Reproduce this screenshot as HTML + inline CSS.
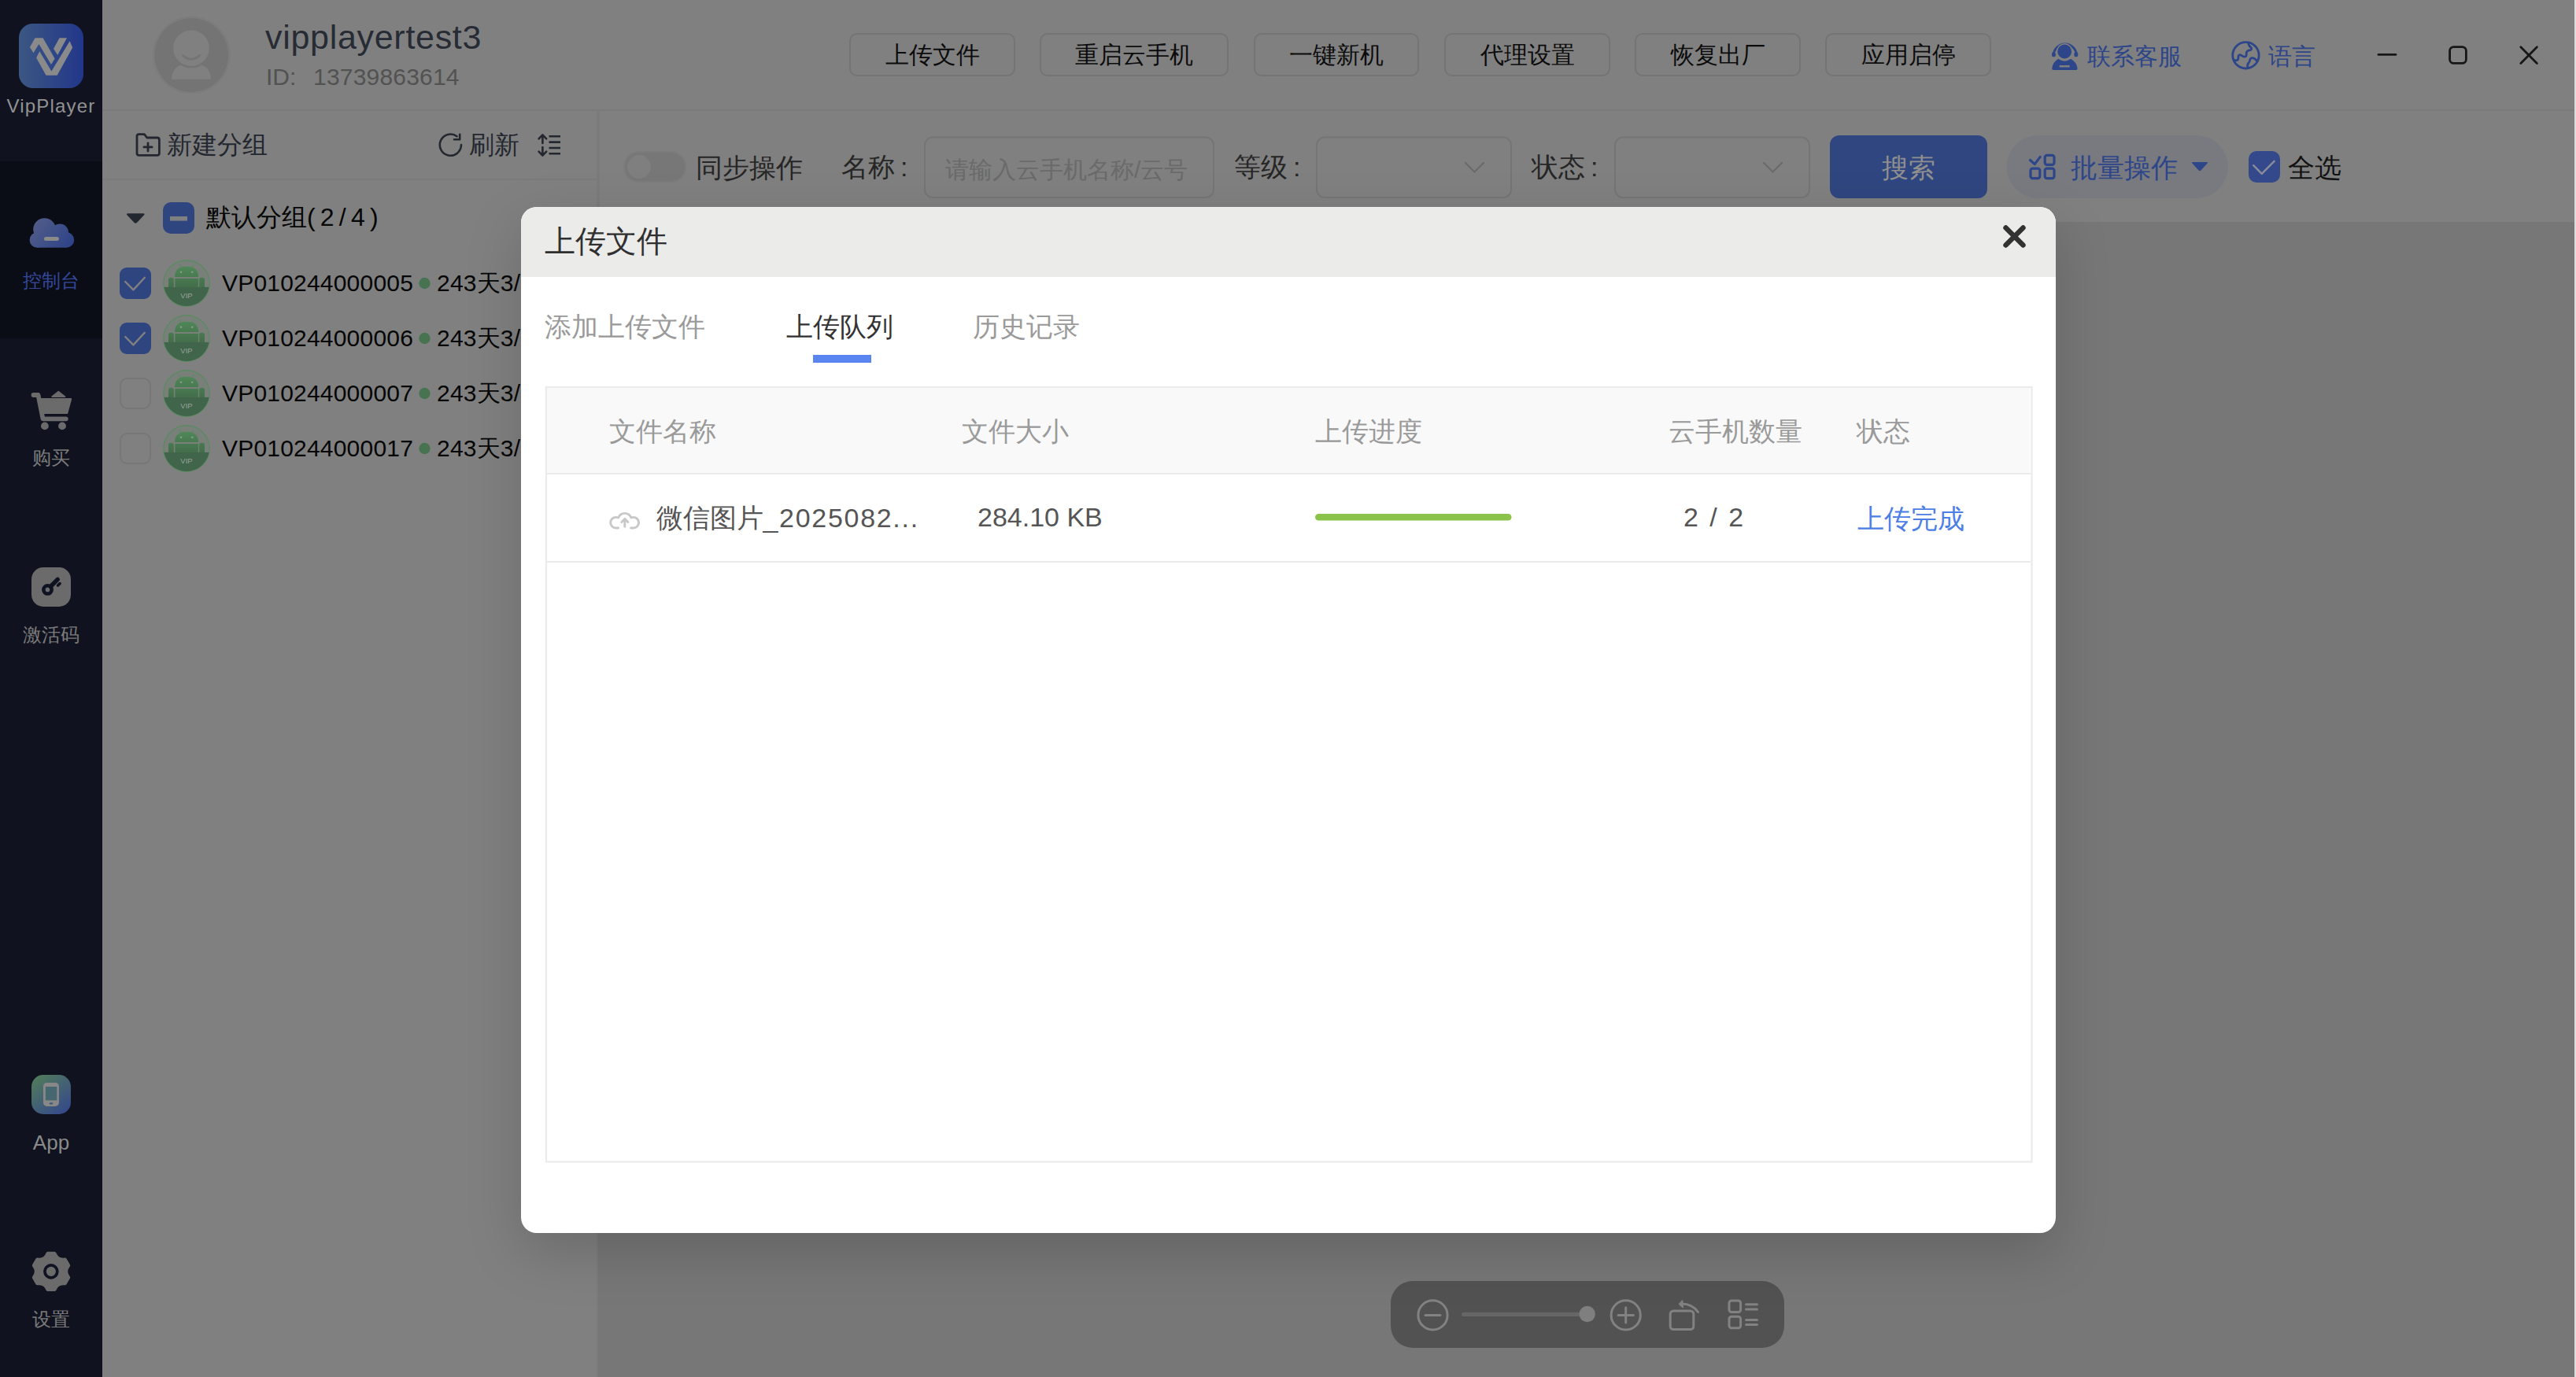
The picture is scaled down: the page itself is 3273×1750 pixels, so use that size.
<!DOCTYPE html>
<html><head><meta charset="utf-8">
<style>
html,body{margin:0;padding:0;}
body{width:3273px;height:1750px;overflow:hidden;position:relative;background:#808080;font-family:"Liberation Sans",sans-serif;}
.a{position:absolute;}
.t{position:absolute;white-space:nowrap;line-height:1;}
svg{position:absolute;left:0;top:0;overflow:visible;}
.btn{position:absolute;top:42px;height:55px;border:2px solid #747474;border-radius:10px;box-sizing:border-box;}
.btxt{position:absolute;left:0;top:11px;width:100%;text-align:center;font-size:30px;line-height:30px;color:#0c0c0c;}
.side{font-size:24px;color:#7b7b7b;left:0;width:130px;text-align:center;}
.f34{font-size:34px;}
.dev{font-size:30px;color:#060606;letter-spacing:0.2px;}
</style></head><body>
<!-- ============ SIDEBAR ============ -->
<div class="a" style="left:0;top:0;width:130px;height:1750px;background:#10131f"></div>
<div class="a" style="left:0;top:205px;width:130px;height:225px;background:#0a0c16"></div>
<svg width="130" height="1750" viewBox="0 0 130 1750">
  <defs>
    <linearGradient id="lg" x1="24" y1="0" x2="106" y2="0" gradientUnits="userSpaceOnUse"><stop offset="0" stop-color="#3c5783"/><stop offset="1" stop-color="#22378a"/></linearGradient>
    <linearGradient id="cg" x1="40" y1="277" x2="90" y2="315" gradientUnits="userSpaceOnUse"><stop offset="0" stop-color="#545f88"/><stop offset="1" stop-color="#2d4288"/></linearGradient>
    <linearGradient id="ag" x1="45" y1="1366" x2="85" y2="1416" gradientUnits="userSpaceOnUse"><stop offset="0" stop-color="#527c5a"/><stop offset="1" stop-color="#34478c"/></linearGradient>
  </defs>
  <rect x="24" y="30" width="82" height="82" rx="18" fill="url(#lg)"/>
  <g transform="translate(24,30)" fill="#8a8a8a">
    <path d="M13.9,30.1 L20.5,18.3 L30.6,18.3 L45.6,44.4 L41,52 L25.4,26.1 L18.5,37.3 Z"/>
    <path d="M44,32 L51.5,18.3 L61,18.3 L49.2,39.9 Z"/>
    <path d="M22.1,43.5 L26.3,35.3 L41.4,60.5 L64.6,22.2 L68.2,30.4 L48.6,65.7 L34.5,65.7 Z"/>
  </g>
  <!-- cloud -->
  <g fill="url(#cg)">
    <circle cx="56.6" cy="291.6" r="14.4"/><circle cx="76.2" cy="295.5" r="10.9"/>
    <circle cx="47.4" cy="305" r="9.8"/><circle cx="84.4" cy="304.9" r="9.8"/>
    <rect x="47.4" y="294" width="37" height="20.7"/>
  </g>
  <rect x="55.9" y="301" width="19" height="5" rx="2.5" fill="#8a8a8a"/>
  <!-- cart -->
  <g transform="translate(30,488)" fill="#6b6b6b" stroke="#6b6b6b" stroke-linecap="round" stroke-linejoin="round">
    <path d="M12.5,14 H18.5 L24.5,44.3 H53.8" fill="none" stroke-width="5.8"/>
    <path d="M21,19.4 H59.8 L55,36.8 H24.6 Z" stroke-width="2.6"/>
    <circle cx="26.9" cy="53.4" r="4.9" stroke="none"/><circle cx="49" cy="53.4" r="4.9" stroke="none"/>
    <path d="M36,16.2 L44.2,9.6 L52.6,16.2 Z" stroke-width="1.5"/>
  </g>
  <!-- key -->
  <rect x="40" y="721" width="50" height="50" rx="15" fill="#6b6b6b"/>
  <g stroke="#0f1220" fill="none" stroke-linecap="round">
    <circle cx="60.5" cy="749.4" r="5.1" stroke-width="4.6"/>
    <path d="M64.2,745.5 L73.2,736.4" stroke-width="5.4"/>
    <path d="M73.5,744 L76,741.6" stroke-width="3.6"/>
  </g>
  <!-- app -->
  <rect x="40" y="1366" width="50" height="50" rx="15" fill="url(#ag)"/>
  <rect x="55" y="1376" width="19.9" height="29.9" rx="4.5" fill="#888"/>
  <rect x="57.9" y="1381" width="14.4" height="17.4" fill="#46676f"/>
  <rect x="62.8" y="1401.2" width="4.4" height="2.3" rx="1" fill="#40597e"/>
  <!-- gear -->
  <path d="M60.80,1593.30 L69.20,1593.30 Q72.80,1602.39 82.47,1600.96 L82.47,1600.96 L86.67,1608.24 Q80.60,1615.90 86.67,1623.56 L86.67,1623.56 L82.47,1630.84 Q72.80,1629.41 69.20,1638.50 L69.20,1638.50 L60.80,1638.50 Q57.20,1629.41 47.53,1630.84 L47.53,1630.84 L43.33,1623.56 Q49.40,1615.90 43.33,1608.24 L43.33,1608.24 L47.53,1600.96 Q57.20,1602.39 60.80,1593.30 Z" fill="#6b6b6b" stroke="#6b6b6b" stroke-width="5" stroke-linejoin="round"/>
  <circle cx="64.85" cy="1615.85" r="7.95" fill="none" stroke="#0f1220" stroke-width="3.7"/>
</svg>
<div class="t" style="left:0;width:130px;text-align:center;top:123px;font-size:24px;letter-spacing:1.2px;color:#929292">VipPlayer</div>
<div class="t side" style="top:345px;color:#34489a">控制台</div>
<div class="t side" style="top:570px">购买</div>
<div class="t side" style="top:795px">激活码</div>
<div class="t side" style="top:1439px;font-size:26px;color:#8a8a8a">App</div>
<div class="t side" style="top:1665px">设置</div>

<!-- ============ HEADER ============ -->
<div class="a" style="left:130px;top:139px;width:3141px;height:2px;background:#7a7a7a"></div>
<svg width="3273" height="140" viewBox="0 0 3273 140">
  <circle cx="243.2" cy="70" r="48.3" fill="none" stroke="#7b7b7b" stroke-width="1.5"/>
  <circle cx="243.2" cy="70" r="47" fill="#747474"/>
  <path d="M218,100.8 Q218.5,80.5 243,80.5 Q267.5,80.5 268,100.8 Z" fill="#808080"/>
  <circle cx="243" cy="61.2" r="24" fill="#808080" stroke="#747474" stroke-width="2.5"/>
  <path d="M232.5,70.5 Q243,80 253.5,70.5" fill="none" stroke="#747474" stroke-width="3" stroke-linecap="round"/>
  <!-- headset -->
  <g fill="#2d4589">
    <path d="M2609.2,70.5 A14.6,14.6 0 0 1 2638.4,70.5" fill="none" stroke="#2d4589" stroke-width="2.8"/>
    <rect x="2607" y="66.2" width="4.8" height="6" rx="2"/>
    <rect x="2635.4" y="66.2" width="4.8" height="6" rx="2"/>
    <circle cx="2623.2" cy="65.5" r="10.4" fill="#808080"/>
    <circle cx="2623.2" cy="65.5" r="8.9"/>
    <path d="M2607.2,87 Q2607.8,79.5 2615.3,74.8 Q2623.2,80.5 2631,74.8 Q2639,79.5 2639.6,87 Q2639.6,89 2637.5,89 H2609.2 Q2607.1,89 2607.2,87 Z"/>
  </g>
  <rect x="2616.5" y="83" width="13.3" height="2.4" rx="1" fill="#808080"/>
  <!-- globe -->
  <g fill="none" stroke="#2d4589" stroke-width="2.8" stroke-linecap="round" stroke-linejoin="round">
    <circle cx="2853.45" cy="70.3" r="16.7"/>
    <path transform="translate(2830,48)" d="M26.8,6.5 Q27,10.5 30,12.2 Q31.5,14.5 29.5,15.5 Q26,15.8 24.6,18 Q24,19.5 24.2,22 Q23.8,24.8 20.8,24 L16.5,21.8 Q14,21.5 13.9,24 V26.5 Q13.5,28.8 10.8,28.8 L8.3,28.4 M25.8,37.6 Q25.2,34 27,32 Q28.8,30 28.8,27.8 Q29.5,25.5 32,25.7 Q35,26 37.6,29.4"/>
  </g>
  <!-- window controls -->
  <g fill="none" stroke="#161616" stroke-width="2.8" stroke-linecap="round">
    <path d="M3022,69.4 H3044"/>
    <rect x="3112.6" y="59.6" width="20.8" height="20.8" rx="5"/>
    <path d="M3202.8,59.8 L3223.4,80.4 M3223.4,59.8 L3202.8,80.4"/>
  </g>
</svg>
<div class="t" style="left:337px;top:26px;font-size:43px;letter-spacing:0.7px;color:#272b34">vipplayertest3</div>
<div class="t" style="left:338px;top:83px;font-size:30px;color:#525252">ID:</div>
<div class="t" style="left:398px;top:83px;font-size:30px;letter-spacing:0.2px;color:#525252">13739863614</div>

<div class="btn" style="left:1079px;width:211px"><div class="btxt">上传文件</div></div>
<div class="btn" style="left:1321px;width:240px"><div class="btxt">重启云手机</div></div>
<div class="btn" style="left:1593px;width:210px"><div class="btxt">一键新机</div></div>
<div class="btn" style="left:1835px;width:211px"><div class="btxt">代理设置</div></div>
<div class="btn" style="left:2077px;width:211px"><div class="btxt">恢复出厂</div></div>
<div class="btn" style="left:2319px;width:211px"><div class="btxt">应用启停</div></div>
<div class="t" style="left:2652px;top:57px;font-size:30px;color:#2d4589">联系客服</div>
<div class="t" style="left:2882px;top:57px;font-size:30px;color:#2d4589">语言</div>

<!-- ============ LEFT PANEL ============ -->
<div class="a" style="left:758px;top:141px;width:4px;height:141px;background:#7b7b7b"></div><div class="a" style="left:758px;top:282px;width:2px;height:1468px;background:#7b7b7b"></div>
<div class="a" style="left:130px;top:227px;width:628px;height:2px;background:#7b7b7b"></div>
<svg width="760" height="620" viewBox="0 0 760 620">
  <g fill="none" stroke="#23272f" stroke-width="2.8" stroke-linecap="round" stroke-linejoin="round">
    <path d="M174,173 Q174,170.6 176.5,170.6 H183.4 L186.8,175 H199.6 Q202.4,175 202.4,177.8 V194.8 Q202.4,197.4 199.6,197.4 H176.8 Q174,197.4 174,194.8 Z"/>
    <path d="M188,181.8 V192 M182.9,186.9 H193.1"/>
    <path d="M586,184.1 A13.6,13.6 0 1 1 580.5,173.2" stroke-width="2.6"/>
    <path d="M577,177.2 H584.2 V170.8" stroke-width="2.6"/>
    <path d="M689.4,172 V182 M684.6,176.4 L689.4,171.4 L694.2,176.4 M689.4,187 V197 M684.6,192.6 L689.4,197.6 L694.2,192.6" stroke-width="2.6"/>
    <path d="M697.5,173.3 H712 M697.5,180.6 H712 M697.5,188 H712 M697.5,195.2 H712" stroke-width="2.6" stroke-linecap="butt"/>
  </g>
  <path d="M162.5,271.2 H182 Q184.6,271.2 182.9,273.4 L173.9,283 Q172.2,284.6 170.6,283 L161.6,273.4 Q159.9,271.2 162.5,271.2 Z" fill="#23272f"/>
  <rect x="207" y="257" width="40" height="40" rx="10" fill="#2f4580"/>
  <rect x="216" y="275" width="22" height="5.6" fill="#808080"/>
  <defs>
    <linearGradient id="ang" x1="0" y1="13" x2="0" y2="40" gradientUnits="userSpaceOnUse"><stop offset="0" stop-color="#4f8858"/><stop offset="1" stop-color="#436e4a"/></linearGradient>
    <clipPath id="cc"><circle cx="37" cy="35" r="29"/></clipPath>
    <g id="andr">
      <circle cx="37" cy="35" r="29.2" fill="#788079" stroke="#5c8a62" stroke-width="1.4"/>
      <g clip-path="url(#cc)">
        <rect x="0" y="39.9" width="80" height="30" fill="#40654a"/>
      </g>
      <path d="M14,39.9 V30.5 Q14,27.7 17.4,27.7 Q20.8,27.7 20.8,30.5 V39.9 Z M53.1,39.9 V30.5 Q53.1,27.7 56.5,27.7 Q60,27.7 60,30.5 V39.9 Z" fill="url(#ang)"/>
      <rect x="22.4" y="29" width="29.5" height="11" fill="url(#ang)"/>
      <path d="M22.1,26.9 Q22.1,13.7 37.1,13.7 Q52.1,13.7 52.1,26.9 Z" fill="url(#ang)"/>
      <path d="M28,11 L30.2,15 M46.5,11 L44.2,15" stroke="#5a8a62" stroke-width="1.1"/>
      <circle cx="30" cy="20.8" r="1.3" fill="#8a9a8c"/><circle cx="44.2" cy="20.8" r="1.3" fill="#8a9a8c"/>
      <text x="37" y="53.6" font-family="Liberation Sans" font-size="9.5" fill="#9aa29a" text-anchor="middle">VIP</text>
    </g>
  </defs>
  <use href="#andr" x="200" y="325"/>
  <use href="#andr" x="200" y="395"/>
  <use href="#andr" x="200" y="465"/>
  <use href="#andr" x="200" y="535"/>
  <g fill="#2f4580">
    <rect x="152" y="340" width="40" height="40" rx="9"/>
    <rect x="152" y="410" width="40" height="40" rx="9"/>
  </g>
  <g fill="none" stroke="#777" stroke-width="2">
    <rect x="153" y="481" width="38" height="38" rx="8.5"/>
    <rect x="153" y="551" width="38" height="38" rx="8.5"/>
  </g>
  <g fill="none" stroke="#808080" stroke-width="2.4" stroke-linecap="round" stroke-linejoin="round">
    <path d="M159.2,358 L169.4,368.4 L183.8,352.8"/>
    <path d="M159.2,428 L169.4,438.4 L183.8,422.8"/>
  </g>
  <g fill="#487350">
    <circle cx="539.5" cy="360" r="7.2"/><circle cx="539.5" cy="430" r="7.2"/>
    <circle cx="539.5" cy="500" r="7.2"/><circle cx="539.5" cy="570" r="7.2"/>
  </g>
</svg>
<div class="t" style="left:212px;top:168px;font-size:32px;color:#23272f">新建分组</div>
<div class="t" style="left:596px;top:168px;font-size:32px;color:#23272f">刷新</div>
<div class="t" style="left:262px;top:259.5px;font-size:32px;color:#060606">默认分组<span style="letter-spacing:6.2px">(2/4)</span></div>
<div class="t dev" style="left:282px;top:345px">VP010244000005</div>
<div class="t dev" style="left:282px;top:415px">VP010244000006</div>
<div class="t dev" style="left:282px;top:485px">VP010244000007</div>
<div class="t dev" style="left:282px;top:555px">VP010244000017</div>
<div class="t dev" style="left:555px;top:345px">243天3/</div>
<div class="t dev" style="left:555px;top:415px">243天3/</div>
<div class="t dev" style="left:555px;top:485px">243天3/</div>
<div class="t dev" style="left:555px;top:555px">243天3/</div>

<!-- ============ FILTER ROW ============ -->
<svg width="3273" height="282" viewBox="0 0 3273 282">
  <rect x="793" y="193" width="78" height="38" rx="19" fill="#777" stroke="#7b7b7b" stroke-width="2"/>
  <circle cx="812" cy="212" r="15" fill="#7f7f7f"/>
  <g fill="none" stroke="#757575" stroke-width="2">
    <rect x="1175" y="174.5" width="367" height="76.5" rx="10"/>
    <rect x="1673" y="174.5" width="247" height="76.5" rx="10"/>
    <rect x="2052" y="174.5" width="247" height="76.5" rx="10"/>
  </g>
  <g fill="none" stroke="#6a6a6a" stroke-width="2.2" stroke-linecap="round" stroke-linejoin="round">
    <path d="M1862,207 L1873.5,218.5 L1885,207"/>
    <path d="M2241,207 L2252.5,218.5 L2264,207"/>
  </g>
  <rect x="2325" y="172" width="200" height="80" rx="12" fill="#2f4680"/>
  <rect x="2549.5" y="172" width="281.5" height="80" rx="40" fill="#797a80"/>
  <g fill="none" stroke="#2d4589" stroke-width="3.2" stroke-linecap="round" stroke-linejoin="round">
    <path d="M2579.5,203.5 L2585.2,208.6 L2592.2,199.4"/>
    <rect x="2598.2" y="197.4" width="11.8" height="12" rx="2.6"/>
    <rect x="2580" y="214.2" width="11.8" height="12.4" rx="2.6"/>
    <rect x="2598.2" y="214.2" width="11.8" height="12.4" rx="2.6"/>
  </g>
  <path d="M2786,206 H2804 Q2806,206 2804.6,207.6 L2796.4,216.6 Q2795,218 2793.6,216.6 L2785.4,207.6 Q2784,206 2786,206 Z" fill="#2d4589"/>
  <rect x="2857" y="192" width="40" height="40" rx="10" fill="#34498c"/>
  <path d="M2863.2,210.2 L2873.8,220.8 L2889.6,204.8" fill="none" stroke="#8a8c9a" stroke-width="2.4" stroke-linecap="round" stroke-linejoin="round"/>
</svg>
<div class="t f34" style="left:884px;top:196px;color:#262626">同步操作</div>
<div class="t f34" style="left:1069px;top:195px;color:#262626">名称<span style="margin-left:7px">:</span></div>
<div class="t" style="left:1201px;top:201px;font-size:30px;color:#6a6a6a">请输入云手机名称/云号</div>
<div class="t f34" style="left:1568px;top:195px;color:#262626">等级<span style="margin-left:7px">:</span></div>
<div class="t f34" style="left:1946px;top:195px;color:#262626">状态<span style="margin-left:7px">:</span></div>
<div class="t f34" style="left:2325px;top:196px;width:200px;text-align:center;color:#8f8f8f">搜索</div>
<div class="t f34" style="left:2631px;top:196px;color:#2d4589">批量操作</div>
<div class="t f34" style="left:2907px;top:196px;color:#121212">全选</div>

<!-- ============ RIGHT CONTENT ============ -->
<div class="a" style="left:760px;top:282px;width:2511px;height:1468px;background:#777777"></div>
<div class="a" style="left:3271px;top:0;width:2px;height:1750px;background:#dcdcdc"></div>
<svg width="3273" height="1750" viewBox="0 0 3273 1750">
  <rect x="1767" y="1628" width="500" height="85" rx="28" fill="#525252"/>
  <g fill="none" stroke="#828282" stroke-width="3" stroke-linecap="round" stroke-linejoin="round">
    <circle cx="1820.5" cy="1671.4" r="18.6"/>
    <path d="M1811,1671.4 H1830"/>
    <circle cx="2065.7" cy="1671.4" r="18.6"/>
    <path d="M2056,1671.4 H2075.4 M2065.7,1661.8 V1681"/>
    <rect x="2122.2" y="1666" width="29.6" height="23.6" rx="4"/>
    <path d="M2135.5,1657 Q2150,1656.5 2157.5,1667.5"/>
    <path d="M2137.6,1653 L2133.6,1657.3 L2138.2,1661.4 Z" fill="#828282" stroke-width="1.6"/>
    <rect x="2197" y="1653" width="14.6" height="14.6" rx="3"/>
    <rect x="2197" y="1673.2" width="14.6" height="14.6" rx="3"/>
    <path d="M2218.5,1657.8 H2232.5 M2218.5,1664 H2232.5 M2218.5,1677.5 H2232.5 M2218.5,1683.5 H2232.5"/>
  </g>
  <rect x="1857" y="1667.8" width="152" height="5.2" rx="2.6" fill="#666"/>
  <circle cx="2016.7" cy="1670" r="10.2" fill="#7f7f7f"/>
</svg>

<!-- ============ DIALOG ============ -->
<div class="a" style="left:662px;top:263px;width:1950px;height:1304px;border-radius:20px;background:#fff;box-shadow:0 24px 70px rgba(0,0,0,0.17);overflow:hidden">
  <div class="a" style="left:0;top:0;width:1950px;height:89px;background:#ebebea"></div>
  <div class="t" style="left:29.5px;top:24px;font-size:39px;color:#303030">上传文件</div>
  <svg width="1950" height="1304" viewBox="662 263 1950 1304" style="left:0;top:0">
    <path d="M2548.5,289.5 L2570.5,311.5 M2570.5,289.5 L2548.5,311.5" stroke="#323232" stroke-width="6.4" stroke-linecap="round" fill="none"/>
    <rect x="1033" y="451" width="74" height="10" fill="#5a84f0"/>
    <rect x="694" y="492" width="1887.5" height="984.5" fill="none" stroke="#ebebeb" stroke-width="2.2"/>
    <rect x="695" y="493" width="1884" height="108" fill="#f9f9f9"/>
    <rect x="694" y="601" width="1886" height="2" fill="#ebebeb"/>
    <rect x="694" y="713" width="1886" height="2" fill="#ebebeb"/>
    <path transform="translate(765,640)" d="M20.6,31 H17.5 A6.8,6.8 0 0 1 17.5,17.4 Q19.5,17.4 20.8,17.8 A8.6,8.6 0 0 1 36.8,17.8 Q38,17.4 39.8,17.4 A6.8,6.8 0 0 1 39.8,31 H36.6 M24.8,23.5 L28.8,19.4 L32.9,23.5 M28.8,19.8 V29.4" fill="none" stroke="#c8c8c8" stroke-width="2.9" stroke-linecap="round" stroke-linejoin="round"/>
    <rect x="1671" y="653" width="249.5" height="8.6" rx="4.3" fill="#8bc34a"/>
  </svg>
  <div class="t f34" style="left:30px;top:135px;color:#9a9a9a">添加上传文件</div>
  <div class="t f34" style="left:337px;top:135px;color:#333">上传队列</div>
  <div class="t f34" style="left:574px;top:135px;color:#9a9a9a">历史记录</div>
  <div class="t f34" style="left:111.5px;top:268px;color:#9a9a9a">文件名称</div>
  <div class="t f34" style="left:560px;top:268px;color:#9a9a9a">文件大小</div>
  <div class="t f34" style="left:1009px;top:268px;color:#9a9a9a">上传进度</div>
  <div class="t f34" style="left:1457.5px;top:268px;color:#9a9a9a">云手机数量</div>
  <div class="t f34" style="left:1697px;top:268px;color:#9a9a9a">状态</div>
  <div class="t f34" style="left:171.5px;top:378px;color:#555">微信图片<span style="letter-spacing:1.7px">_2025082...</span></div>
  <div class="t f34" style="left:580px;top:377px;color:#555">284.10 KB</div>
  <div class="t f34" style="left:1477px;top:377px;color:#555;letter-spacing:2.5px">2 / 2</div>
  <div class="t f34" style="left:1698px;top:379px;color:#4d7ee6">上传完成</div>
</div>
</body></html>
